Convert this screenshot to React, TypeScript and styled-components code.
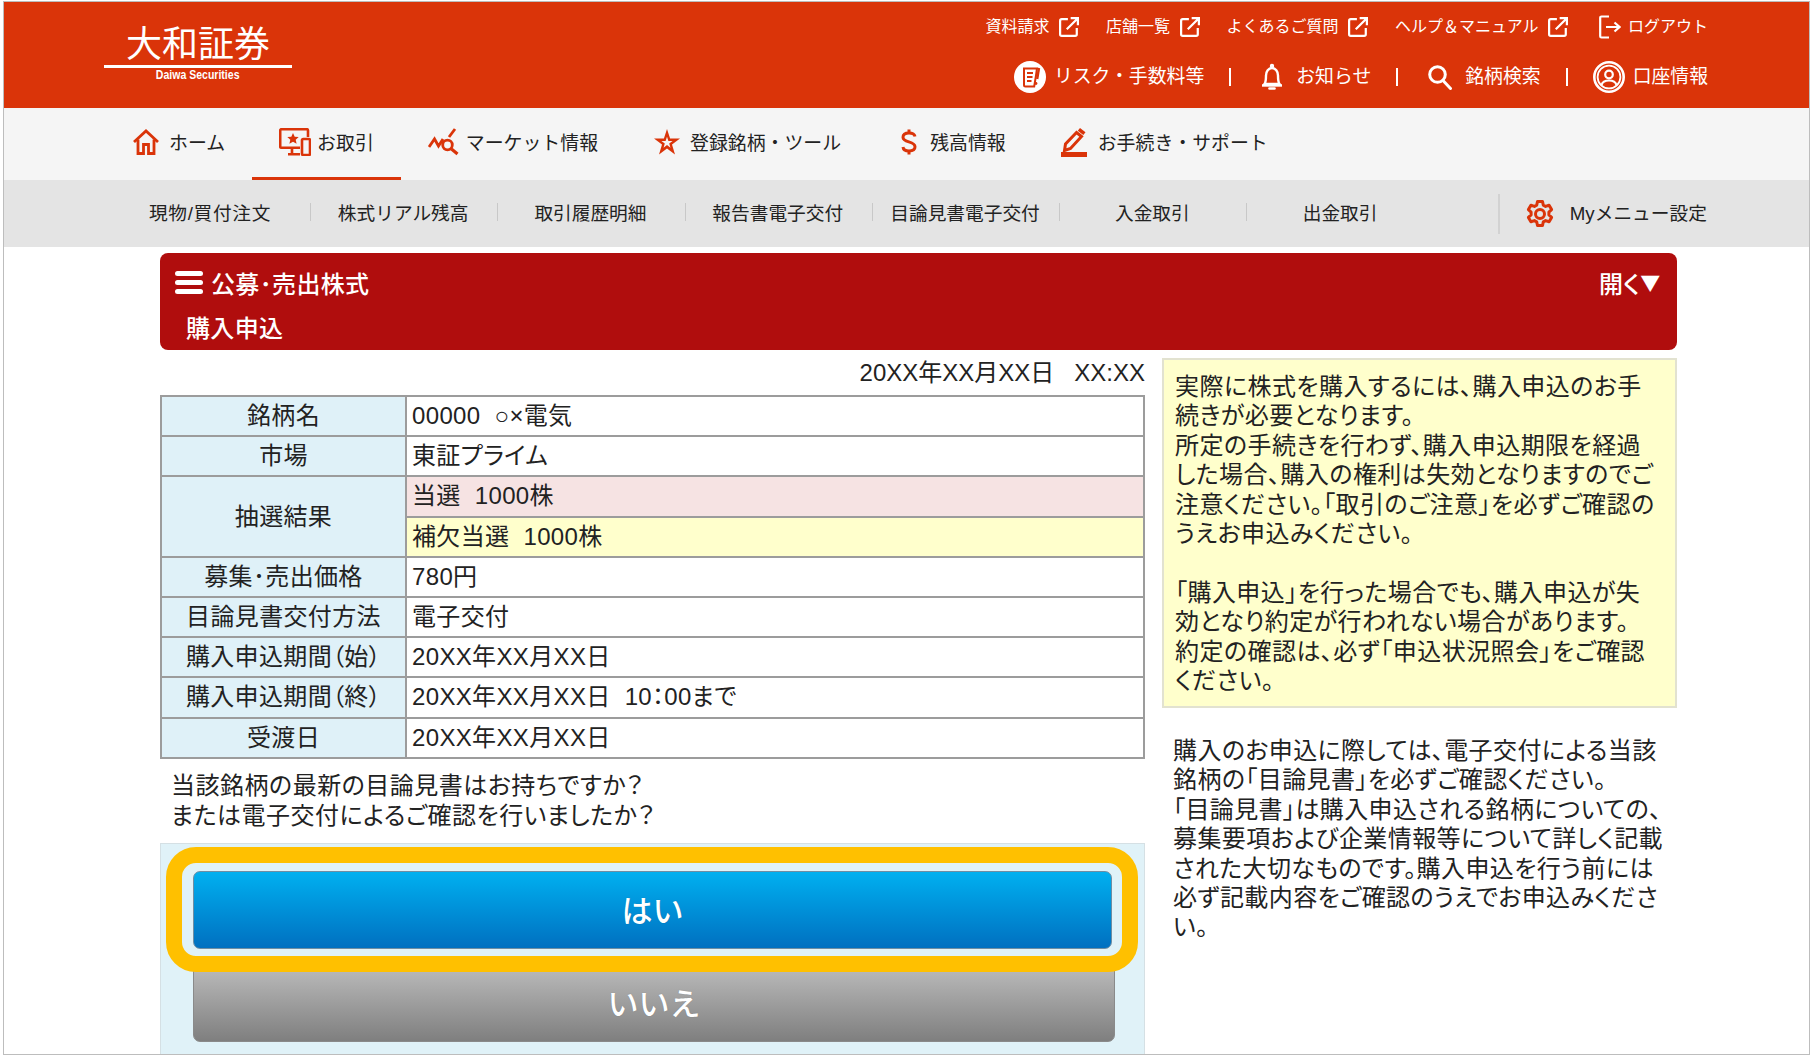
import React from "react";
import styled, { createGlobalStyle } from "styled-components";

const RED = "#da3409";
const STACK = `"Liberation Sans", "Noto Sans CJK JP", sans-serif`;

const Global = createGlobalStyle`
  html, body { margin: 0; padding: 0; background: #fff; }
  body { font-family: ${STACK}; color: #222; overflow: hidden; }
`;

const Frame = styled.div`
  box-sizing: border-box;
  width: 1807px;
  height: 1054px;
  margin: 1px 0 0 3px;
  border: 1px solid #bdbdbd;
  overflow: hidden;
  background: #fff;
`;

/* ---------- header ---------- */
const Header = styled.header`
  height: 106px;
  background: ${RED};
  display: flex;
  justify-content: space-between;
  padding: 0 101px 0 100px;
  color: #fff;
`;
const Logo = styled.div`
  width: 188px;
  padding-top: 20px;
  display: flex;
  flex-direction: column;
  align-items: center;
`;
const LogoMark = styled.div`
  font-family: "Noto Sans CJK JP", sans-serif;
  font-size: 36px;
  line-height: 38px;
  font-weight: 400;
`;
const LogoRule = styled.div`
  width: 100%;
  height: 3px;
  margin-top: 5px;
  background: #fff;
`;
const LogoName = styled.div`
  font-size: 13px;
  line-height: 14px;
  font-weight: 700;
  white-space: nowrap;
  transform: scaleX(0.81);
`;
const HeaderRight = styled.div`
  display: flex;
  flex-direction: column;
  align-items: flex-end;
  padding-top: 13px;
`;
const TopRow = styled.div`
  display: flex;
  align-items: center;
  height: 24px;
  gap: 26.5px;
`;
const TopLink = styled.a<{ $gap?: number; $lead?: number }>`
  display: flex;
  align-items: center;
  gap: ${(p) => p.$gap ?? 10}px;
  margin-left: ${(p) => p.$lead ?? 0}px;
  font-size: 16px;
  line-height: 24px;
  white-space: nowrap;
`;
const MainRow = styled.div`
  display: flex;
  align-items: center;
  height: 36px;
  margin-top: 20px;
`;
const MainLink = styled.a<{ $gap: number; $inset?: number }>`
  display: flex;
  align-items: center;
  gap: ${(p) => p.$gap}px;
  padding-left: ${(p) => p.$inset ?? 0}px;
  font-size: 18.85px;
  line-height: 36px;
  white-space: nowrap;
`;
const MainSep = styled.span`
  width: 2px;
  height: 18px;
  margin: 0 25px;
  background: #fff;
`;

/* ---------- nav ---------- */
const Nav = styled.nav`
  height: 72px;
  background: #f5f5f5;
  display: flex;
  padding-left: 102px;
`;
const NavItem = styled.a<{ $active?: boolean; $gap?: number; $lead?: number }>`
  box-sizing: border-box;
  height: 72px;
  padding: 0 27px 2px ${(p) => p.$lead ?? 27}px;
  display: flex;
  align-items: center;
  gap: ${(p) => p.$gap ?? 10}px;
  font-size: 18.9px;
  white-space: nowrap;
  color: #222;
  border-bottom: 3px solid ${(p) => (p.$active ? RED : "transparent")};
`;

const SubNav = styled.div`
  height: 67px;
  background: #e4e4e4;
  display: flex;
  align-items: center;
  padding: 0 0 4px 106px;
  box-sizing: border-box;
`;
const SubItem = styled.a<{ $first?: boolean; $last?: boolean }>`
  box-sizing: border-box;
  width: ${(p) => (p.$first ? 201 : 187.3)}px;
  height: 18px;
  padding-right: ${(p) => (p.$first ? 0 : 2)}px;
  display: flex;
  align-items: center;
  justify-content: center;
  font-size: 18.7px;
  letter-spacing: ${(p) => (p.$first ? 0.7 : 0)}px;
  white-space: nowrap;
  border-right: ${(p) => (p.$last ? "0" : "1px solid #c8c8c8")};
`;
const SubSetting = styled.a`
  height: 40px;
  margin: 4px 0 0 63px;
  padding-left: 26px;
  display: flex;
  align-items: center;
  gap: 16px;
  font-size: 18.7px;
  white-space: nowrap;
  border-left: 2px solid #d2d2d2;
  & > span {
    position: relative;
    top: -2px;
  }
`;

/* ---------- content ---------- */
const Content = styled.main`
  width: 1516.5px;
  margin: 6px 0 0 156px;
  font-feature-settings: "palt";
  letter-spacing: 0.35px;
`;
const Banner = styled.div`
  box-sizing: border-box;
  height: 97px;
  background: #b00d0d;
  border-radius: 8px;
  color: #fff;
  padding: 10px 16px 0 15px;
`;
const BannerTop = styled.div`
  display: flex;
  align-items: center;
  justify-content: space-between;
  height: 38px;
`;
const BannerTitle = styled.div`
  display: flex;
  align-items: center;
  gap: 8px;
  font-size: 24px;
  font-weight: 500;
`;
const Burger = styled.span`
  display: flex;
  flex-direction: column;
  gap: 4px;
  width: 28px;
  & > i {
    display: block;
    height: 5px;
    border-radius: 3px;
    background: #fff;
  }
`;
const Opener = styled.div`
  display: flex;
  align-items: center;
  font-family: "Noto Sans CJK JP", sans-serif;
  font-size: 24px;
  font-weight: 500;
`;
const OpenerArrow = styled.span`
  font-size: 20px;
`;
const BannerSub = styled.div`
  font-size: 24px;
  font-weight: 500;
  line-height: 38px;
  margin: 9px 0 0 11px;
`;
const Columns = styled.div`
  display: flex;
  gap: 17px;
`;
const LeftCol = styled.div`
  width: 985px;
`;
const RightCol = styled.div`
  width: 514.5px;
  padding-top: 8px;
`;
const DateLine = styled.div`
  height: 45px;
  font-size: 24px;
  line-height: 46px;
  text-align: right;
  white-space: nowrap;
  letter-spacing: 0;
`;
const Table = styled.table`
  width: 985px;
  border-collapse: collapse;
  table-layout: fixed;
  font-size: 24px;
  line-height: 1;
`;
const Th = styled.th`
  width: 243px;
  height: 38.2px;
  padding: 0;
  font-weight: 400;
  text-align: center;
  background: #dff1f8;
  border: 2px solid #9c9c9c;
  white-space: nowrap;
`;
const Td = styled.td<{ $bg?: string }>`
  height: 38.2px;
  padding: 0 0 0 5px;
  background: ${(p) => p.$bg ?? "#fff"};
  border: 2px solid #9c9c9c;
  white-space: nowrap;
`;
const Question = styled.p`
  margin: 12px 0 12px 11px;
  font-size: 24px;
  line-height: 30px;
  white-space: nowrap;
  letter-spacing: 0.5px;
`;
const ButtonPanel = styled.div`
  position: relative;
  height: 220px;
  box-sizing: border-box;
  background: #e0f2f8;
  border: 1px solid #d5e0e4;
  border-bottom: 0;
  padding: 27px 0 0 32px;
`;
const Btn = styled.button<{ $width: number; $from: string; $to: string; $edge: string }>`
  display: block;
  width: ${(p) => p.$width}px;
  height: 78px;
  padding: 0 0 3px;
  border: 1px solid ${(p) => p.$edge};
  border-radius: 7px;
  background: linear-gradient(${(p) => p.$from}, ${(p) => p.$to});
  color: #fff;
  font-family: ${STACK};
  font-size: 31px;
  font-weight: 500;
  text-shadow: 0 0 1px rgba(0, 0, 0, 0.25);
`;
const GreyBtn = styled(Btn)`
  margin-top: 15px;
`;
const Callout = styled.div`
  position: absolute;
  left: 5px;
  top: 3px;
  width: 972px;
  height: 125px;
  box-sizing: border-box;
  border: 16px solid #ffc000;
  border-radius: 30px;
  pointer-events: none;
`;
const Notice = styled.div`
  box-sizing: border-box;
  height: 350px;
  padding: 12px 11px;
  background: #ffffcc;
  border: 2px solid #e2e2d0;
  font-size: 24px;
  line-height: 29.4px;
  white-space: nowrap;
  letter-spacing: 0.45px;
`;
const Guide = styled.div`
  margin: 28px 0 0 11px;
  font-size: 24px;
  line-height: 29.4px;
  white-space: nowrap;
  letter-spacing: 0.4px;
`;

/* ---------- icons ---------- */
const Svg = styled.svg`
  flex: none;
  display: block;
`;

const ExtIcon = () => (
  <Svg width="20" height="20" viewBox="0 0 18 18" fill="none" stroke="#fff" strokeWidth="2">
    <path d="M8 2H2.500A1.500 1.500 0 0 0 1 3.500v12A1.500 1.500 0 0 0 2.500 17h12a1.500 1.500 0 0 0 1.500-1.500V10" />
    <path d="M7 11 16.500 1.500M10.500 1H17v6.500" />
  </Svg>
);
const LogoutIcon = () => (
  <Svg width="22" height="24" viewBox="0 0 22 24" fill="none" stroke="#fff" strokeWidth="2.200">
    <path d="M10 1.500H2.500A1.300 1.300 0 0 0 1.200 2.800v18.400a1.300 1.300 0 0 0 1.300 1.300H10" />
    <path d="M7 12h13M15.500 7.500 20.500 12l-5 4.500" />
  </Svg>
);
const RiskIcon = () => (
  <Svg width="32" height="32" viewBox="0 0 32 32">
    <circle cx="16" cy="16" r="16" fill="#fff" />
    <path d="M10 7.500h13l-1 7-1.800 11H11.500A1.500 1.500 0 0 1 10 24Z" fill="none" stroke={RED} strokeWidth="2" />
    <path d="M13 12h6M13 16h5.500M13 20h4.500" stroke={RED} strokeWidth="1.800" />
    <path d="M25 7l-1.800 11" stroke={RED} strokeWidth="2.400" />
    <circle cx="22" cy="22.500" r="1.400" fill={RED} />
  </Svg>
);
const BellIcon = () => (
  <Svg width="22" height="28" viewBox="0 0 22 28" fill="none" stroke="#fff" strokeWidth="2.400">
    <path d="M3.500 21c1.500-2 1.500-5 1.500-8.500C5 8.500 7.500 5 11 5s6 3.500 6 7.500c0 3.500 0 6.500 1.500 8.500Z" />
    <path d="M1 22.500h20" />
    <circle cx="11" cy="3" r="1" fill="#fff" />
    <path d="M8.500 25.500h5" strokeWidth="2.600" strokeLinecap="round" />
  </Svg>
);
const SearchIcon = () => (
  <Svg width="24" height="25" viewBox="0 0 24 25" fill="none" stroke="#fff" strokeWidth="3">
    <circle cx="9.500" cy="9.500" r="7.800" />
    <path d="M15 15.500l7.500 8" strokeLinecap="round" />
  </Svg>
);
const PersonIcon = () => (
  <Svg width="32" height="32" viewBox="0 0 32 32" fill="none" stroke="#fff" strokeWidth="2.200">
    <circle cx="16" cy="16" r="14.700" strokeWidth="2.600" />
    <circle cx="16" cy="16" r="11.400" strokeWidth="1.800" />
    <circle cx="16" cy="13.500" r="3.800" />
    <path d="M8.500 24c1-3.500 3.500-4.500 7.500-4.500s6.500 1 7.500 4.500" />
  </Svg>
);
const HomeIcon = () => (
  <Svg width="26" height="26" viewBox="0 0 26 26" fill="none" stroke={RED} strokeWidth="2.800">
    <path d="M1 13 13 2l12 11" strokeLinejoin="miter" />
    <path d="M5 10.500V24.500h5.500V15.500h5V24.500H21V10.500" />
  </Svg>
);
const TradeIcon = () => (
  <Svg width="32" height="28" viewBox="0 0 32 28" fill="none" stroke={RED} strokeWidth="2.600">
    <path d="M29 9V2.500A1.300 1.300 0 0 0 27.700 1.200H2.500A1.300 1.300 0 0 0 1.200 2.500V18.500a1.300 1.300 0 0 0 1.300 1.300H21" />
    <path d="M13 20v5M9 26.300h12" />
    <path fill={RED} stroke="none" d="m14 5 1.700 3.700 4 .4-3 2.700.9 4-3.600-2-3.600 2 .9-4-3-2.700 4-.4Z" />
    <rect x="23" y="11" width="8" height="16" rx="1.300" />
  </Svg>
);
const MarketIcon = () => (
  <Svg width="32" height="28" viewBox="0 0 32 28" fill="none" stroke={RED} strokeWidth="2.800">
    <path d="M1 19 6.500 11l4 7L15 11" />
    <path d="M21 9 27 1" />
    <circle cx="19.500" cy="17" r="4.800" />
    <path d="M23.500 21l6 5" strokeWidth="3.200" />
  </Svg>
);
const StarIcon = () => (
  <Svg width="26" height="26" viewBox="0 0 26 26">
    <path
      fillRule="evenodd"
      fill={RED}
      d="M13 0l3.100 9.600H26l-8 5.900L21 25.500l-8-6-8 6 3-10L0 9.600h9.900ZM13 7.800l-1.400 4.200H7.400l3.400 2.500-1.300 4.200 3.500-2.600 3.500 2.600-1.300-4.200 3.400-2.500h-4.200Z"
    />
  </Svg>
);
const DollarIcon = () => (
  <Svg width="16" height="26" viewBox="0 0 16 26" fill="none" stroke={RED} strokeWidth="3">
    <path d="M14 7.500C13.500 5 11 4 8 4 4.500 4 2 5.500 2 8.200c0 6 12 3.300 12 9.600C14 20.500 11.500 22 8 22c-3.500 0-5.700-1.300-6-4" />
    <path d="M8 0.500V4M8 22v3.500" />
  </Svg>
);
const PencilIcon = () => (
  <Svg width="26" height="30" viewBox="0 0 26 30">
    <rect x="0" y="25" width="26" height="5" fill={RED} />
    <path d="M19 1l5.500 4.200-2.200 2.800-5.500-4.200Z" fill={RED} />
    <path d="M15.500 5.500l5 4L9.500 21.500l-6 2 1-6.500Z" fill="none" stroke={RED} strokeWidth="3" />
  </Svg>
);
const GearIcon = () => (
  <Svg width="28" height="28" viewBox="0 0 27 28" fill="none" stroke={RED} strokeWidth="3">
    <path d="M11 1.500h5l.8 3.600 2.300 1.300 3.500-1.100 2.500 4.300-2.700 2.500v2.800l2.700 2.500-2.500 4.300-3.500-1.100-2.300 1.300-.8 3.600h-5l-.8-3.600-2.300-1.300-3.500 1.100-2.500-4.300 2.700-2.500v-2.800L1.900 9.600l2.500-4.300 3.500 1.100 2.300-1.300Z" strokeLinejoin="round" />
    <circle cx="13.500" cy="14" r="4.500" />
  </Svg>
);

const NB3 = "\u00a0\u00a0\u00a0";
const NB2 = "\u00a0\u00a0";

const rows: [string, string][] = [
  ["募集･売出価格", "780円"],
  ["目論見書交付方法", "電子交付"],
  ["購入申込期間（始）", "20XX年XX月XX日"],
  ["購入申込期間（終）", `20XX年XX月XX日${NB2}10：00まで`],
  ["受渡日", "20XX年XX月XX日"],
];
const subItems = ["現物/買付注文", "株式リアル残高", "取引履歴明細", "報告書電子交付", "目論見書電子交付", "入金取引", "出金取引"];
const topLinks = ["資料請求", "店舗一覧", "よくあるご質問", "ヘルプ＆マニュアル"];

export default function App() {
  return (
    <>
      <Global />
      <Frame>
        <Header>
          <Logo>
            <LogoMark>大和証券</LogoMark>
            <LogoRule />
            <LogoName>Daiwa Securities</LogoName>
          </Logo>
          <HeaderRight>
            <TopRow>
              {topLinks.map((t) => (
                <TopLink key={t}>
                  {t}
                  <ExtIcon />
                </TopLink>
              ))}
              <TopLink $gap={7} $lead={4}>
                <LogoutIcon />
                ログアウト
              </TopLink>
            </TopRow>
            <MainRow>
              <MainLink $gap={8}><RiskIcon />リスク・手数料等</MainLink>
              <MainSep />
              <MainLink $gap={13} $inset={5}><BellIcon />お知らせ</MainLink>
              <MainSep />
              <MainLink $gap={13} $inset={5}><SearchIcon />銘柄検索</MainLink>
              <MainSep />
              <MainLink $gap={8}><PersonIcon />口座情報</MainLink>
            </MainRow>
          </HeaderRight>
        </Header>
        <Nav>
          <NavItem><HomeIcon />ホーム</NavItem>
          <NavItem $active $gap={6}><TradeIcon />お取引</NavItem>
          <NavItem $gap={6}><MarketIcon />マーケット情報</NavItem>
          <NavItem $lead={29}><StarIcon />登録銘柄・ツール</NavItem>
          <NavItem $gap={13} $lead={33}><DollarIcon />残高情報</NavItem>
          <NavItem $gap={11} $lead={28}><PencilIcon />お手続き・サポート</NavItem>
        </Nav>
        <SubNav>
          {subItems.map((s, i) => (
            <SubItem key={s} $first={i === 0} $last={i === subItems.length - 1}>{s}</SubItem>
          ))}
          <SubSetting><GearIcon /><span>Myメニュー設定</span></SubSetting>
        </SubNav>
        <Content>
          <Banner>
            <BannerTop>
              <BannerTitle>
                <Burger><i /><i /><i /></Burger>
                公募･売出株式
              </BannerTitle>
              <Opener>開く<OpenerArrow>▼</OpenerArrow></Opener>
            </BannerTop>
            <BannerSub>購入申込</BannerSub>
          </Banner>
          <Columns>
            <LeftCol>
              <DateLine>20XX年XX月XX日{NB3}XX:XX</DateLine>
              <Table>
                <tbody>
                  <tr><Th>銘柄名</Th><Td>00000{NB2}○×電気</Td></tr>
                  <tr><Th>市場</Th><Td>東証プライム</Td></tr>
                  <tr><Th rowSpan={2}>抽選結果</Th><Td $bg="#f6e3e3">当選{NB2}1000株</Td></tr>
                  <tr><Td $bg="#ffffcc">補欠当選{NB2}1000株</Td></tr>
                  {rows.map(([h, v]) => (
                    <tr key={h}><Th>{h}</Th><Td>{v}</Td></tr>
                  ))}
                </tbody>
              </Table>
              <Question>
                当該銘柄の最新の目論見書はお持ちですか？<br />
                または電子交付によるご確認を行いましたか？
              </Question>
              <ButtonPanel>
                <Btn $width={919} $from="#00b0f0" $to="#0070c0" $edge="#6f8ea3">はい</Btn>
                <GreyBtn $width={922} $from="#bcbcbc" $to="#7f7f7f" $edge="#8a8a8a">いいえ</GreyBtn>
                <Callout />
              </ButtonPanel>
            </LeftCol>
            <RightCol>
              <Notice>
                実際に株式を購入するには、購入申込のお手<br />
                続きが必要となります。<br />
                所定の手続きを行わず、購入申込期限を経過<br />
                した場合、購入の権利は失効となりますのでご<br />
                注意ください。「取引のご注意」を必ずご確認の<br />
                うえお申込みください。<br />
                <br />
                「購入申込」を行った場合でも、購入申込が失<br />
                効となり約定が行われない場合があります。<br />
                約定の確認は、必ず「申込状況照会」をご確認<br />
                ください。
              </Notice>
              <Guide>
                購入のお申込に際しては、電子交付による当該<br />
                銘柄の「目論見書」を必ずご確認ください。<br />
                「目論見書」は購入申込される銘柄についての、<br />
                募集要項および企業情報等について詳しく記載<br />
                された大切なものです。購入申込を行う前には<br />
                必ず記載内容をご確認のうえでお申込みくださ<br />
                い。
              </Guide>
            </RightCol>
          </Columns>
        </Content>
      </Frame>
    </>
  );
}
